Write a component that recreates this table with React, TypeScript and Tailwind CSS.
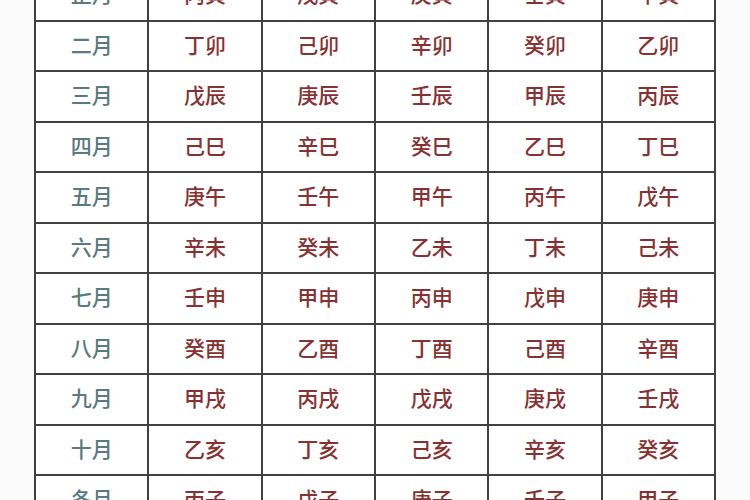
import React from 'react';

const rows: [string, string[]][] = [
  ['正月', ['丙寅', '戊寅', '庚寅', '壬寅', '甲寅']],
  ['二月', ['丁卯', '己卯', '辛卯', '癸卯', '乙卯']],
  ['三月', ['戊辰', '庚辰', '壬辰', '甲辰', '丙辰']],
  ['四月', ['己巳', '辛巳', '癸巳', '乙巳', '丁巳']],
  ['五月', ['庚午', '壬午', '甲午', '丙午', '戊午']],
  ['六月', ['辛未', '癸未', '乙未', '丁未', '己未']],
  ['七月', ['壬申', '甲申', '丙申', '戊申', '庚申']],
  ['八月', ['癸酉', '乙酉', '丁酉', '己酉', '辛酉']],
  ['九月', ['甲戌', '丙戌', '戊戌', '庚戌', '壬戌']],
  ['十月', ['乙亥', '丁亥', '己亥', '辛亥', '癸亥']],
  ['冬月', ['丙子', '戊子', '庚子', '壬子', '甲子']],
];

export default function App() {
  return (
    <div
      className="w-[750px] h-[500px] overflow-hidden bg-[#fbfbfb]"
      style={{ fontFamily: '"Noto Sans CJK SC", "Noto Sans", sans-serif' }}
    >
      {/* month table, top and bottom rows cut off by the frame */}
      <div className="ml-[34px] mt-[-29px] w-[682px] bg-white border-l-2 border-[#404040]">
        {rows.map(([month, cells]) => (
          <div key={month} className="grid grid-cols-6 h-[50.5px] border-b-2 border-[#404040]">
            <div className="flex items-center justify-center border-r-2 border-[#404040] text-[21px] font-medium text-[#587a80] pb-[3px]">
              {month}
            </div>
            {cells.map((c) => (
              <div
                key={c}
                className="flex items-center justify-center border-r-2 border-[#404040] text-[21px] font-medium text-[#863232] pb-[3px]"
              >
                {c}
              </div>
            ))}
          </div>
        ))}
      </div>
    </div>
  );
}
